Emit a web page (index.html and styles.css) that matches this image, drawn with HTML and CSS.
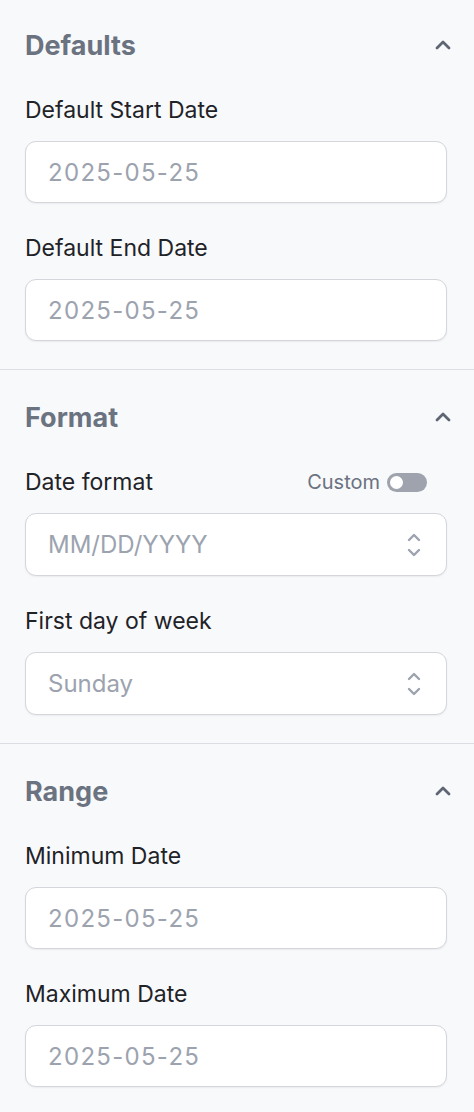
FILE: index.html
```html
<!DOCTYPE html>
<html lang="en">
<head>
    <meta charset="UTF-8">
    <meta name="viewport" content="width=device-width, initial-scale=1.0">
    <title>Date settings</title>
    <link rel="stylesheet" href="styles.css">
</head>
<body>

    <div class="panel">
        <!-- Defaults -->
        <section class="group first">
            <div class="group-head">
                <h2>Defaults</h2>
                <svg class="caret" width="16" height="10" viewBox="0 0 16 10"><path d="M2 8 L8 2 L14 8" fill="none" stroke="currentColor" stroke-width="2.8" stroke-linecap="round" stroke-linejoin="round"/></svg>
            </div>
            <div class="field">
                <label>Default Start Date</label>
                <div class="input date">2025-05-25</div>
            </div>
            <div class="field">
                <label>Default End Date</label>
                <div class="input date">2025-05-25</div>
            </div>
        </section>

        <!-- Format -->
        <section class="group">
            <div class="group-head">
                <h2>Format</h2>
                <svg class="caret" width="16" height="10" viewBox="0 0 16 10"><path d="M2 8 L8 2 L14 8" fill="none" stroke="currentColor" stroke-width="2.8" stroke-linecap="round" stroke-linejoin="round"/></svg>
            </div>
            <div class="field">
                <div class="label-row">
                    <label>Date format</label>
                    <span class="switch-wrap">Custom <span class="switch"><span class="knob"></span></span></span>
                </div>
                <div class="input select">
                    <span>MM/DD/YYYY</span>
                    <svg class="updown" width="16" height="28" viewBox="0 0 16 28"><path d="M3 9 L8 4 L13 9 M3 19 L8 24 L13 19" fill="none" stroke="currentColor" stroke-width="2.4" stroke-linecap="round" stroke-linejoin="round"/></svg>
                </div>
            </div>
            <div class="field">
                <label>First day of week</label>
                <div class="input select">
                    <span>Sunday</span>
                    <svg class="updown" width="16" height="28" viewBox="0 0 16 28"><path d="M3 9 L8 4 L13 9 M3 19 L8 24 L13 19" fill="none" stroke="currentColor" stroke-width="2.4" stroke-linecap="round" stroke-linejoin="round"/></svg>
                </div>
            </div>
        </section>

        <!-- Range -->
        <section class="group">
            <div class="group-head">
                <h2>Range</h2>
                <svg class="caret" width="16" height="10" viewBox="0 0 16 10"><path d="M2 8 L8 2 L14 8" fill="none" stroke="currentColor" stroke-width="2.8" stroke-linecap="round" stroke-linejoin="round"/></svg>
            </div>
            <div class="field">
                <label>Minimum Date</label>
                <div class="input date">2025-05-25</div>
            </div>
            <div class="field">
                <label>Maximum Date</label>
                <div class="input date">2025-05-25</div>
            </div>
        </section>
    </div>

</body>
</html>
```

FILE: styles.css
```css
:root {
    --bg: #f8f9fb;
    --heading: #6b7280;
    --text: #1f2328;
    --muted: #9ca3af;
    --border: #d4d6dc;
    --divider: #dcdee3;
}

* {
    margin: 0;
    padding: 0;
    box-sizing: border-box;
}

body {
    font-family: Inter, "Noto Sans", sans-serif;
    background-color: var(--bg);
    color: var(--text);
}

.group {
    padding: 27px 27px 28px 25px;
    border-top: 1px solid var(--divider);
}

.group.first {
    padding-top: 25px;
    border-top: none;
}

.group-head {
    display: flex;
    justify-content: space-between;
    align-items: center;
    height: 40px;
}

.group-head h2 {
    font-size: 27px;
    font-weight: 700;
    color: var(--heading);
}

.caret {
    color: #5f6573;
    margin-right: -4px;
}

.field {
    margin-top: 31px;
}

.field label {
    display: block;
    font-size: 23px;
    line-height: 28px;
    color: var(--text);
}

.label-row {
    display: flex;
    justify-content: space-between;
    align-items: center;
}

.switch-wrap {
    display: flex;
    align-items: center;
    gap: 7px;
    margin-right: 20px;
    font-size: 20px;
    color: #6b7280;
}

.switch {
    width: 40px;
    height: 19px;
    border-radius: 10px;
    background-color: #9ea3ad;
    display: flex;
    align-items: center;
    padding-left: 3px;
}

.knob {
    width: 13px;
    height: 13px;
    border-radius: 50%;
    background-color: #ffffff;
}

.input {
    margin-top: 17px;
    height: 62px;
    background-color: #ffffff;
    border: 1px solid var(--border);
    border-radius: 11px;
    box-shadow: 0 1px 2px rgba(0, 0, 0, 0.06);
    padding: 0 22px;
    display: flex;
    align-items: center;
    font-size: 24px;
    color: var(--muted);
}

.input.date {
    letter-spacing: 1.3px;
}

.input.select {
    height: 63px;
    justify-content: space-between;
    padding-right: 24px;
}

.updown {
    color: var(--muted);
}
```
